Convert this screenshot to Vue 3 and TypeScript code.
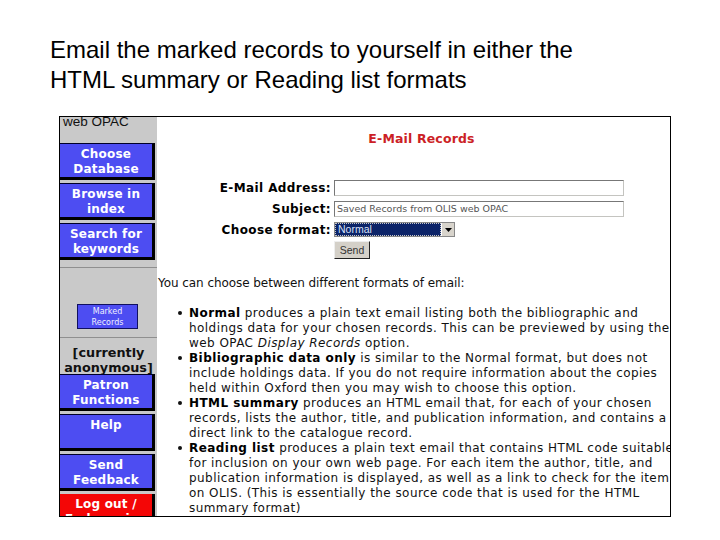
<script setup lang="ts">
const topButtons = [
  ['Choose', 'Database'],
  ['Browse in', 'index'],
  ['Search for', 'keywords'],
]
const lowerButtons = [
  ['Patron', 'Functions'],
  ['Help', '\u00a0'],
  ['Send', 'Feedback'],
]
</script>

<template>
  <div class="slide">
    <h1 class="title">Email the marked records to yourself in either the<br />HTML summary or Reading list formats</h1>
    <div class="shot">
      <aside class="side">
        <div class="brand">web OPAC</div>
        <a v-for="b in topButtons" :key="b[0]" class="nav">{{ b[0] }}<br />{{ b[1] }}</a>
        <hr class="rule rule-a" />
        <a class="marked">Marked<br />Records</a>
        <hr class="rule rule-b" />
        <div class="anon">[currently<br />anonymous]</div>
        <a v-for="b in lowerButtons" :key="b[0]" class="nav low">{{ b[0] }}<br />{{ b[1] }}</a>
        <a class="nav low red">Log out /<br />End session</a>
      </aside>
      <main class="main">
        <h2 class="head">E-Mail Records</h2>
        <div class="form">
          <label class="lab">E-Mail Address:</label>
          <div class="field"></div>
          <label class="lab">Subject:</label>
          <div class="field subj">Saved Records from OLIS web OPAC</div>
          <label class="lab">Choose format:</label>
          <div class="select">
            <span class="sel-text">Normal</span>
            <span class="arrow"><svg width="7" height="4" viewBox="0 0 7 4"><path d="M0 0h7L3.5 4z" fill="#000" /></svg></span>
          </div>
          <span></span>
          <div class="send">Send</div>
        </div>
        <p class="intro">You can choose between different formats of email:</p>
        <ul class="list">
          <li><b>Normal</b> produces a plain text email listing both the bibliographic and<br />holdings data for your chosen records. This can be previewed by using the<br />web OPAC <i>Display Records</i> option.</li>
          <li><b>Bibliographic data only</b> is similar to the Normal format, but does not<br />include holdings data. If you do not require information about the copies<br />held within Oxford then you may wish to choose this option.</li>
          <li><b>HTML summary</b> produces an HTML email that, for each of your chosen<br />records, lists the author, title, and publication information, and contains a<br />direct link to the catalogue record.</li>
          <li><b>Reading list</b> produces a plain text email that contains HTML code suitable<br />for inclusion on your own web page. For each item the author, title, and<br />publication information is displayed, as well as a link to check for the item<br />on OLIS. (This is essentially the source code that is used for the HTML<br />summary format)</li>
        </ul>
      </main>
    </div>
  </div>
</template>

<style>
html, body { margin: 0; background: #fff; }
</style>

<style scoped>
.slide {
  width: 720px;
  height: 540px;
  box-sizing: border-box;
  padding: 35px 49px 0 50px;
  overflow: hidden;
  background: #fff;
}
.title {
  margin: 0 0 22px;
  height: 59px;
  font: 400 24px/30px "Liberation Sans", Arial, sans-serif;
  color: #000;
  white-space: nowrap;
}
.shot {
  display: flex;
  margin-left: 9px;
  width: 612px;
  height: 401px;
  box-sizing: border-box;
  border: 1px solid #000;
  font-family: "DejaVu Sans", Verdana, sans-serif;
  overflow: hidden;
}
.side {
  width: 97px;
  flex: none;
  background: #c9c9c9;
  display: flex;
  flex-direction: column;
  overflow: hidden;
}
.brand {
  height: 26px;
  flex: none;
  font: 400 13.5px/10px "Liberation Sans", Arial, sans-serif;
  padding-left: 3px;
  color: #111;
}
.nav {
  box-sizing: border-box;
  width: 95px;
  height: 37px;
  margin-bottom: 3px;
  flex: none;
  background: #4d4df2;
  border-top: 1px solid #000028;
  border-right: 3px solid #000;
  border-bottom: 3px solid #000;
  color: #fff;
  font-size: 12px;
  font-weight: 700;
  line-height: 15px;
  text-align: center;
  padding-top: 3px;
  letter-spacing: 0.2px;
  white-space: nowrap;
}
.red { background: #f40606; border-top: 0; height: 40px; }
.rule {
  margin: 0;
  border: 0;
  border-top: 1px solid #8f8f8f;
  width: 97px;
  flex: none;
}
.rule-a { margin-top: 4px; }
.rule-b { margin-top: 8px; }
.marked {
  box-sizing: border-box;
  width: 61px;
  height: 25px;
  margin: 36px 0 0 17px;
  flex: none;
  background: #4d4df2;
  border: 1px solid #101060;
  color: #f0f0ff;
  font-size: 8px;
  line-height: 10.5px;
  text-align: center;
  padding-top: 2px;
}
.anon {
  margin-top: 7px;
  height: 29px;
  font-size: 12.8px;
  font-weight: 700;
  line-height: 15px;
  text-align: center;
  color: #111;
  white-space: nowrap;
  flex: none;
}
.main {
  flex: 1;
  min-width: 0;
  overflow: hidden;
  background: #fff;
  color: #111;
}
.head {
  margin: 14px 0 0;
  height: 15px;
  text-align: center;
  padding-left: 16px;
  font-size: 12.5px;
  line-height: 15px;
  font-weight: 700;
  color: #cc1f26;
  letter-spacing: 0.15px;
}
.form {
  display: grid;
  grid-template-columns: 174px 290px;
  column-gap: 3px;
  margin-top: 34px;
  grid-auto-rows: min-content;
  align-items: start;
}
.lab {
  text-align: right;
  font-size: 12px;
  font-weight: 700;
  line-height: 15px;
  padding-top: 1px;
  color: #000;
  letter-spacing: 0.4px;
}
.field {
  box-sizing: border-box;
  height: 16px;
  margin-bottom: 5px;
  border: 1px solid #c4c4c0;
  border-top-color: #777;
  border-left-color: #777;
  background: #fff;
}
.subj {
  font: 400 9.5px/14px "DejaVu Sans", Verdana, sans-serif;
  padding-left: 2px;
  color: #555;
  white-space: nowrap;
}
.select {
  display: flex;
  box-sizing: border-box;
  width: 121px;
  height: 15px;
  border: 1px solid #888;
  background: #0c2468;
}
.sel-text {
  flex: 1;
  color: #d8e0f8;
  font: 400 10.5px/13px "Liberation Sans", Arial, sans-serif;
  padding-left: 3px;
  outline: 1px dotted #c8c8c8;
  outline-offset: -1px;
}
.arrow {
  width: 12px;
  background: #d8d4cc;
  display: flex;
  align-items: center;
  justify-content: center;
  border-left: 1px solid #fff;
}
.send {
  box-sizing: border-box;
  width: 36px;
  height: 18px;
  margin-top: 3px;
  background: #d4d0c8;
  border: 1px solid #eee;
  border-right: 1px solid #222;
  border-bottom: 1px solid #222;
  font: 400 10.5px/16px "Liberation Sans", Arial, sans-serif;
  text-align: center;
  color: #333;
}
.intro {
  margin: 17px 0 0 1px;
  font-size: 12px;
  line-height: 15px;
  letter-spacing: -0.06px;
  white-space: nowrap;
}
.list {
  margin: 15px 0 0;
  padding: 0 0 0 32px;
  font-size: 12px;
  line-height: 15px;
  letter-spacing: 0.44px;
  white-space: nowrap;
  list-style: none;
}
.list li::before {
  content: "";
  display: inline-block;
  width: 4px;
  height: 4px;
  margin-left: -11px;
  margin-right: 7px;
  vertical-align: 2px;
  border-radius: 50%;
  background: #111;
}
.list li b { color: #000; }
</style>
